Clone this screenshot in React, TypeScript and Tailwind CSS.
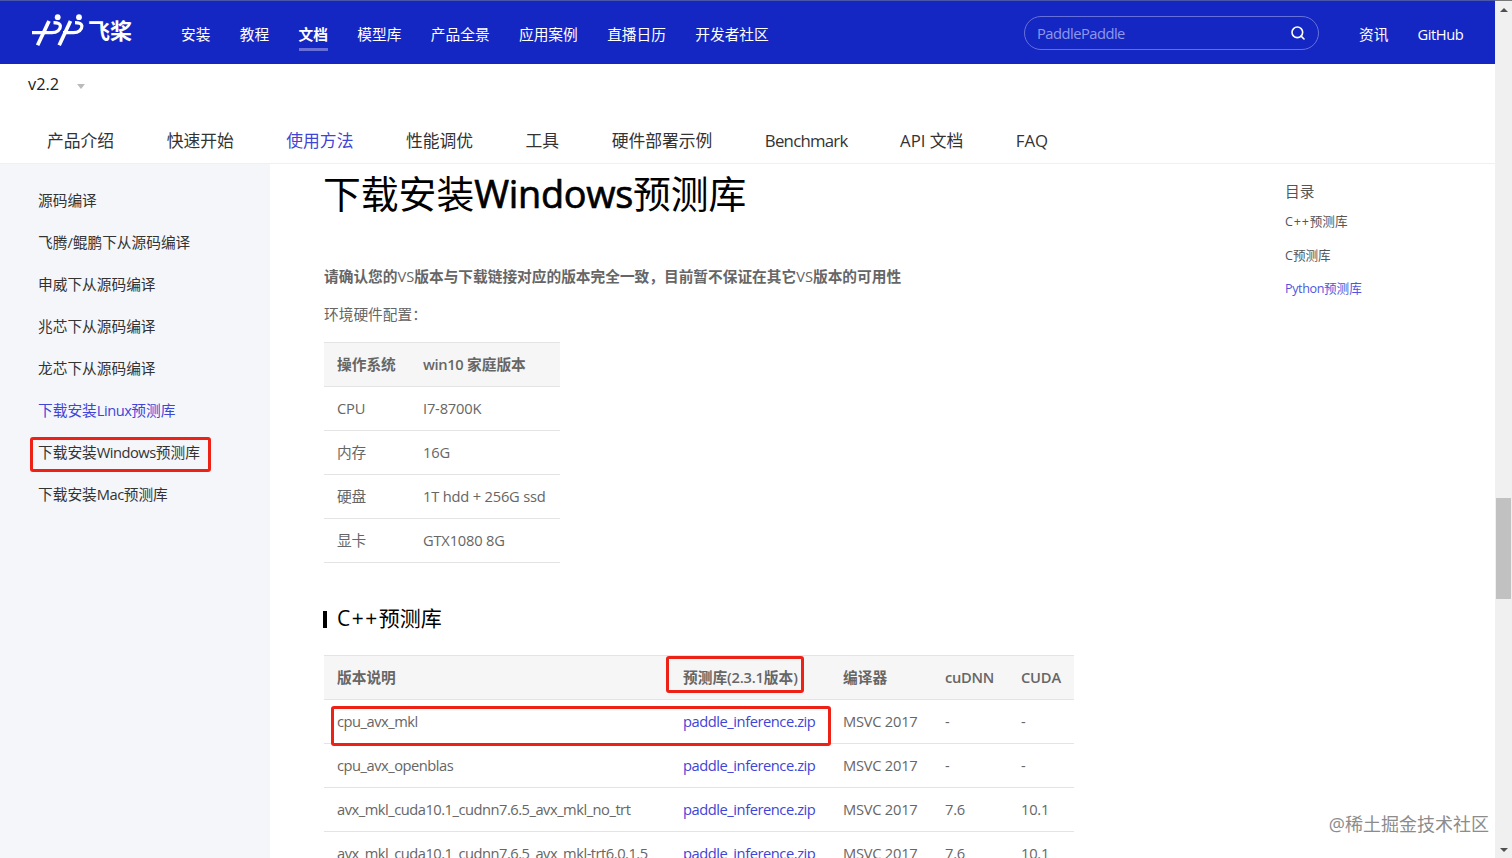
import { Search } from 'lucide-react';
import clsx from 'clsx';

const navItems = ['安装', '教程', '文档', '模型库', '产品全景', '应用案例', '直播日历', '开发者社区'];

const tabs = ['产品介绍', '快速开始', '使用方法', '性能调优', '工具', '硬件部署示例', 'Benchmark', 'API 文档', 'FAQ'];

const sideItems = [
  ['源码编译'],
  ['飞腾/鲲鹏下从源码编译'],
  ['申威下从源码编译'],
  ['兆芯下从源码编译'],
  ['龙芯下从源码编译'],
  ['下载安装', 'Linux', '预测库'],
  ['下载安装', 'Windows', '预测库'],
  ['下载安装', 'Mac', '预测库'],
];

const hardware = [
  ['CPU', 'I7-8700K'],
  ['内存', '16G'],
  ['硬盘', '1T hdd + 256G ssd'],
  ['显卡', 'GTX1080 8G'],
];

const libs = [
  ['cpu_avx_mkl', '-', '-'],
  ['cpu_avx_openblas', '-', '-'],
  ['avx_mkl_cuda10.1_cudnn7.6.5_avx_mkl_no_trt', '7.6', '10.1'],
  ['avx_mkl_cuda10.1_cudnn7.6.5_avx_mkl-trt6.0.1.5', '7.6', '10.1'],
];

function Logo() {
  return (
    <div className="flex items-center w-[149px] ml-8 shrink-0">
      <svg width="52" height="34" viewBox="0 0 52 34" fill="none" stroke="white" strokeWidth="3.2">
        <path d="M0 19.7H20C25 19.7 28.6 16.5 28.4 13C28.1 10.3 25.5 9.6 21.5 9.6" />
        <path d="M17 8L5.6 32.2" strokeWidth="3.7" />
        <path d="M31 19.7H41.5C46.5 19.7 50.1 16.5 49.9 13C49.6 10.3 47 9.6 43 9.6" />
        <path d="M38.5 8L27.2 32.2" strokeWidth="3.7" />
        <circle cx="25.7" cy="4.2" r="2.9" fill="white" stroke="none" />
        <circle cx="47" cy="4.2" r="2.9" fill="white" stroke="none" />
      </svg>
      <span className="ml-1 text-[22px] leading-8 font-bold text-white">飞桨</span>
    </div>
  );
}

function Header() {
  return (
    <header className="flex h-16 shrink-0 items-start border-t border-[#4a57a8] bg-[#1527c3] text-[14.7px] text-white">
      <div className="pt-3">
        <Logo />
      </div>
      <nav className="flex gap-[29.4px] pt-[21px]">
        {navItems.map((item) => (
          <a
            key={item}
            className={clsx('h-[29px] leading-6 whitespace-nowrap border-b-3', item === '文档' ? 'font-bold border-[#686fd9]' : 'border-transparent')}
          >
            {item}
          </a>
        ))}
      </nav>
      <div className="ml-auto mt-[15px] flex h-[34px] w-[295px] items-center justify-between rounded-full border border-[#6570dc] pl-3 pr-3">
        <span className="text-[#8f98ea] tracking-[-0.5px]">PaddlePaddle</span>
        <Search size={16} strokeWidth={2.4} />
      </div>
      <div className="flex w-[176px] gap-[29px] pl-[40px] pt-[21px] leading-6">
        <a>资讯</a>
        <a className="tracking-[-0.4px]">GitHub</a>
      </div>
    </header>
  );
}

function Sidebar() {
  return (
    <aside className="w-[270px] shrink-0 bg-[#f4f6fa] pl-[38px] pt-[16px] text-[14.7px] text-[#333]">
      {sideItems.map(([before, latin, after], i) => (
        <div key={i} className={clsx('relative h-[42px] leading-[41px] whitespace-nowrap', i === 5 && 'text-[#3f45d6]')}>
          {before}
          <span className="tracking-[-0.5px]">{latin}</span>
          {after}
          {i === 6 && (
            <span className="absolute -left-2 top-[5px] h-[35px] w-[181px] rounded-[3px] border-3 border-[#ee2116]"></span>
          )}
        </div>
      ))}
    </aside>
  );
}

function Article() {
  return (
    <main className="w-[805px] shrink-0 pl-[54px] text-[14.7px] text-[#666]">
      <h1 className="-ml-px mt-[2px] h-14 text-[37.8px] leading-14 whitespace-nowrap text-black">
        下载安装<span className="tracking-[-0.3px] [-webkit-text-stroke:0.7px_black]">Windows</span>预测库
      </h1>
      <p className="mt-[42px] leading-6 whitespace-nowrap font-bold">
        请确认您的<span className="font-normal">VS</span>版本与下载链接对应的版本完全一致，目前暂不保证在其它
        <span className="font-normal">VS</span>版本的可用性
      </p>
      <p className="mt-[14px] leading-6">环境硬件配置：</p>

      <table className="mt-[16px] w-[236px] table-fixed border-separate border-spacing-0 text-left">
        <thead className="bg-[#f6f6f6]">
          <tr className="h-[45px]">
            <th className="w-[86px] border-y border-[#e4e4e4] pl-[13px]">操作系统</th>
            <th className="border-y border-[#e4e4e4] pl-[13px] whitespace-nowrap">
              <span className="font-semibold tracking-[-0.4px]">win10</span> 家庭版本
            </th>
          </tr>
        </thead>
        <tbody>
          {hardware.map((row) => (
            <tr key={row[0]} className="h-11">
              {row.map((cell) => (
                <td key={cell} className="border-b border-[#e4e4e4] pl-[13px] tracking-[-0.2px] whitespace-nowrap">
                  {cell}
                </td>
              ))}
            </tr>
          ))}
        </tbody>
      </table>

      <div className="mt-[40px] flex h-8 items-center">
        <span className="h-[17px] w-[4px] -ml-px bg-black"></span>
        <h2 className="ml-[10px] text-[21px] text-black">
          <span className="tracking-[1.5px]">C++</span>预测库
        </h2>
      </div>

      <div className="relative mt-5">
        <table className="w-[750px] table-fixed border-separate border-spacing-0 text-left">
          <thead className="bg-[#f6f6f6]">
            <tr className="h-[45px] whitespace-nowrap font-semibold">
              <th className="w-[346px] border-y border-[#e4e4e4] pl-[13px]">版本说明</th>
              <th className="w-[160px] border-y border-[#e4e4e4] pl-[13px]">
                预测库<span className="font-semibold tracking-[-0.2px]">(2.3.1</span>版本<span className="font-semibold">)</span>
              </th>
              <th className="w-[102px] border-y border-[#e4e4e4] pl-[13px]">编译器</th>
              <th className="w-[76px] border-y border-[#e4e4e4] pl-[13px] font-semibold tracking-[-0.3px]">cuDNN</th>
              <th className="border-y border-[#e4e4e4] pl-[13px] font-semibold tracking-[-0.2px]">CUDA</th>
            </tr>
          </thead>
          <tbody>
            {libs.map(([name, cudnn, cuda]) => (
              <tr key={name} className="h-11 tracking-[-0.25px] whitespace-nowrap">
                <td className="border-b border-[#e4e4e4] pl-[13px] tracking-[-0.49px]">{name}</td>
                <td className="border-b border-[#e4e4e4] pl-[13px] tracking-[-0.45px] text-[#3f45d6]">paddle_inference.zip</td>
                <td className="border-b border-[#e4e4e4] pl-[13px]">MSVC 2017</td>
                <td className="border-b border-[#e4e4e4] pl-[13px]">{cudnn}</td>
                <td className="border-b border-[#e4e4e4] pl-[13px]">{cuda}</td>
              </tr>
            ))}
          </tbody>
        </table>
        <span className="absolute left-[342px] top-[1px] h-[37px] w-[138px] rounded-[3px] border-3 border-[#ee2116]"></span>
        <span className="absolute left-[7px] top-[51px] h-[40px] w-[500px] rounded-[3px] border-3 border-[#ee2116]"></span>
      </div>
    </main>
  );
}

export default function App() {
  return (
    <div className="flex h-[858px] w-full overflow-hidden bg-white font-['Open_Sans','Noto_Sans_CJK_SC',sans-serif]">
      <div className="relative flex min-w-0 flex-1 flex-col overflow-hidden">
        <Header />
        <div className="flex h-[42px] shrink-0 items-center pl-7 pb-px text-[16.3px] text-[#222]">
          v2.2
          <span className="ml-[18px] mt-1 border-x-[4.5px] border-t-[5px] border-x-transparent border-t-[#bbb]"></span>
        </div>
        <div className="flex h-[58px] shrink-0 gap-[52.5px] border-b border-[#eef0f3] pl-[47px] pt-[21px] text-[16.8px] leading-7 text-[#333] whitespace-nowrap">
          {tabs.map((tab) => (
            <a
              key={tab}
              className={clsx(tab === '使用方法' && 'text-[#3f45d6]', tab === 'Benchmark' && 'tracking-[-0.75px]')}
            >
              {tab}
            </a>
          ))}
        </div>
        <div className="flex min-h-0 flex-1">
          <Sidebar />
          <Article />
          <div className="ml-[210px] pt-[13px] text-[12.6px] text-[#555] whitespace-nowrap">
            <div className="text-[14.7px] leading-[28px]">目录</div>
            <div className="leading-[33.5px]">
              <span className="tracking-[0.8px]">C++</span>预测库
            </div>
            <div className="leading-[33.5px]">C预测库</div>
            <div className="leading-[33.5px] text-[#4f55e0]">
              <span className="tracking-[-0.4px]">Python</span>预测库
            </div>
          </div>
        </div>
        <div className="absolute bottom-5 right-[6px] text-[18px] leading-7 text-[#8c8c8c] whitespace-nowrap">@稀土掘金技术社区</div>
      </div>

      {/* Scrollbar */}
      <div className="flex w-[17px] shrink-0 flex-col items-center border-t border-[#777] bg-[#f0f0f0] pt-[7px] pb-[6px]">
        <span className="border-x-4 border-b-4 border-x-transparent border-b-[#505050]"></span>
        <span className="mt-[486px] h-[101px] w-[15px] bg-[#c1c1c1]"></span>
        <span className="mt-auto border-x-4 border-t-4 border-x-transparent border-t-[#505050]"></span>
      </div>
    </div>
  );
}
